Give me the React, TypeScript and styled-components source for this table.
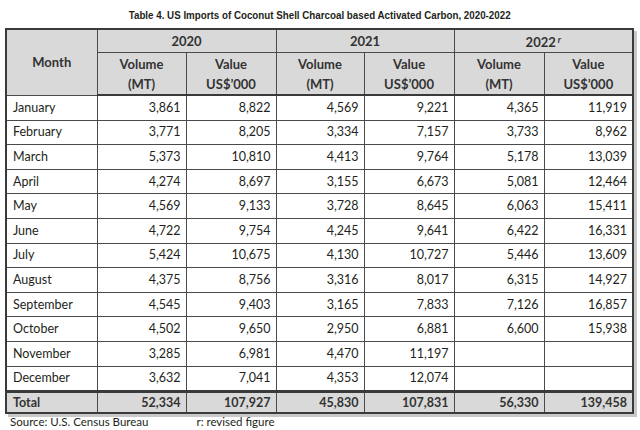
import React from "react";
import styled, { createGlobalStyle } from "styled-components";

const GlobalStyle = createGlobalStyle`
  html, body {
    margin: 0;
    padding: 0;
    background: #ffffff;
  }
  body {
    font-family: Lato, "Noto Sans", "Liberation Sans", sans-serif;
    color: #231f20;
    overflow: hidden;
  }
`;

const Page = styled.div`
  width: 640px;
  height: 430px;
  padding: 6px 0 0 5px;
  box-sizing: border-box;
`;

const Title = styled.div`
  width: 630px;
  text-align: center;
  height: 22px;
  line-height: 14px;
`;

const TitleText = styled.span`
  display: inline-block;
  font-family: "Liberation Sans", Arial, sans-serif;
  font-weight: 700;
  font-size: 11.5px;
  color: #231f20;
  transform: scaleX(0.85);
  white-space: nowrap;
`;

const Table = styled.table`
  width: 627px;
  border-collapse: collapse;
  table-layout: fixed;
  border: 2px solid #3a3a3a;
  box-shadow: 3px 3px 0 #c8c8c8;
  font-size: 12.5px;
`;

const HeadCell = styled.th<{ $tall?: boolean }>`
  background: #d9d9d9;
  border: 1px solid #4a4a4a;
  font-weight: 700;
  color: #333;
  text-align: center;
  padding: 0;
  height: ${({ $tall }) => ($tall ? "41px" : "22px")};
  line-height: 20px;
  font-size: 13px;
`;

const HeadRow = styled.tr`
  &:last-child th {
    border-bottom: 2px solid #3a3a3a;
  }
`;

const Cell = styled.td<{ $num?: boolean }>`
  border: 1px solid #4a4a4a;
  height: 23.6px;
  padding: 0 ${({ $num }) => ($num ? "5px" : "0")} 0 ${({ $num }) => ($num ? "0" : "6px")};
  text-align: ${({ $num }) => ($num ? "right" : "left")};
  color: #231f20;
  line-height: 16px;
`;

const TotalRow = styled.tr`
  td {
    background: #d9d9d9;
    font-weight: 700;
    color: #333;
    border-top: 3px solid #3a3a3a;
    height: 19px;
  }
`;

const Rev = styled.sup`
  font-style: italic;
  font-size: 9px;
  margin-left: 2px;
  vertical-align: 4px;
`;

const Footer = styled.div`
  display: flex;
  gap: 48px;
  padding: 2px 0 0 5px;
  font-size: 11.5px;
  line-height: 12px;
  color: #231f20;
`;

type Row = [string, ...string[]];

const rows: Row[] = [
  ["January", "3,861", "8,822", "4,569", "9,221", "4,365", "11,919"],
  ["February", "3,771", "8,205", "3,334", "7,157", "3,733", "8,962"],
  ["March", "5,373", "10,810", "4,413", "9,764", "5,178", "13,039"],
  ["April", "4,274", "8,697", "3,155", "6,673", "5,081", "12,464"],
  ["May", "4,569", "9,133", "3,728", "8,645", "6,063", "15,411"],
  ["June", "4,722", "9,754", "4,245", "9,641", "6,422", "16,331"],
  ["July", "5,424", "10,675", "4,130", "10,727", "5,446", "13,609"],
  ["August", "4,375", "8,756", "3,316", "8,017", "6,315", "14,927"],
  ["September", "4,545", "9,403", "3,165", "7,833", "7,126", "16,857"],
  ["October", "4,502", "9,650", "2,950", "6,881", "6,600", "15,938"],
  ["November", "3,285", "6,981", "4,470", "11,197", "", ""],
  ["December", "3,632", "7,041", "4,353", "12,074", "", ""],
];

const totals: Row = ["Total", "52,334", "107,927", "45,830", "107,831", "56,330", "139,458"];

const SubHead = () => (
  <>
    <HeadCell $tall>
      Volume
      <br />
      (MT)
    </HeadCell>
    <HeadCell $tall>
      Value
      <br />
      US$’000
    </HeadCell>
  </>
);

export default function App() {
  return (
    <Page>
      <GlobalStyle />
      <Title>
        <TitleText>
          Table 4. US Imports of Coconut Shell Charcoal based Activated Carbon, 2020-2022
        </TitleText>
      </Title>
      <Table>
        <colgroup>
          <col style={{ width: 91 }} />
          <col style={{ width: 89 }} />
          <col style={{ width: 90 }} />
          <col style={{ width: 88 }} />
          <col style={{ width: 90 }} />
          <col style={{ width: 90 }} />
          <col style={{ width: 89 }} />
        </colgroup>
        <thead>
          <tr>
            <HeadCell rowSpan={2}>Month</HeadCell>
            <HeadCell colSpan={2}>2020</HeadCell>
            <HeadCell colSpan={2}>2021</HeadCell>
            <HeadCell colSpan={2}>
              2022<Rev>r</Rev>
            </HeadCell>
          </tr>
          <HeadRow>
            <SubHead />
            <SubHead />
            <SubHead />
          </HeadRow>
        </thead>
        <tbody>
          {rows.map((r) => (
            <tr key={r[0]}>
              {r.map((v, i) => (
                <Cell key={i} $num={i > 0}>
                  {v}
                </Cell>
              ))}
            </tr>
          ))}
          <TotalRow>
            {totals.map((v, i) => (
              <Cell key={i} $num={i > 0}>
                {v}
              </Cell>
            ))}
          </TotalRow>
        </tbody>
      </Table>
      <Footer>
        <span>Source: U.S. Census Bureau</span>
        <span>r: revised figure</span>
      </Footer>
    </Page>
  );
}
